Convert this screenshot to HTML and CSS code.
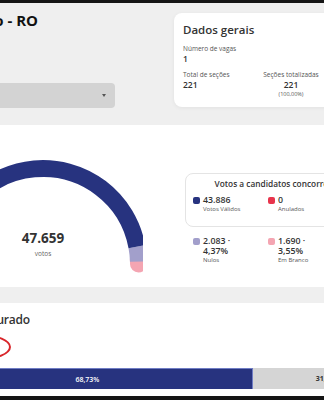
FILE: index.html
```html
<!DOCTYPE html>
<html lang="pt-BR">
<head>
<meta charset="utf-8">
<title>Resultado - RO</title>
<link rel="stylesheet" href="styles.css">
</head>
<body>
<div class="page">
  <header class="top">
    <div class="left">
      <h1 class="title">Porto Velho - RO</h1>
      <div class="select"><span class="caret"></span></div>
    </div>
    <section class="card">
      <h2 class="card-title">Dados gerais</h2>
      <div class="stats">
        <div class="stat">
          <div class="label">Número de vagas</div>
          <div class="value">1</div>
        </div>
        <div class="stat"></div>
        <div class="stat">
          <div class="label">Total de seções</div>
          <div class="value">221</div>
        </div>
        <div class="stat center">
          <div class="label">Seções totalizadas</div>
          <div class="value">221</div>
          <div class="pct">(100,00%)</div>
        </div>
      </div>
    </section>
  </header>

  <section class="votes">
    <div class="gauge">
      <svg class="gauge-svg" width="220" height="162" viewBox="0 0 220 162">
        <path d="M 215.37 134.0 A 95.5 95.5 0 0 1 215.5 139" fill="none" stroke="#f4a5b2" stroke-width="17" stroke-linecap="round"/>
        <path d="M 213.9 121.6 A 95.5 95.5 0 0 1 215.47 136.5" fill="none" stroke="#a29fcb" stroke-width="17"/>
        <path d="M 24.5 139 A 95.5 95.5 0 0 1 213.9 121.6" fill="none" stroke="#27337f" stroke-width="17"/>
      </svg>
      <div class="gauge-label">
        <div class="total">47.659</div>
        <div class="unit">votos</div>
      </div>
    </div>
    <div class="legend-wrap">
      <div class="legend">
        <div class="legend-title">Votos a candidatos concorrentes</div>
        <div class="items">
          <div class="item"><span class="sq navy"></span><div><div class="num">43.886</div><div class="lbl">Votos Válidos</div></div></div>
          <div class="item"><span class="sq red"></span><div><div class="num">0</div><div class="lbl">Anulados</div></div></div>
        </div>
      </div>
      <div class="items outside">
        <div class="item"><span class="sq lilac"></span><div><div class="num">2.083 · 4,37%</div><div class="lbl">Nulos</div></div></div>
        <div class="item"><span class="sq pink"></span><div><div class="num">1.690 · 3,55%</div><div class="lbl">Em Branco</div></div></div>
      </div>
    </div>
  </section>

  <section class="apurado">
    <h2 class="subtitle">Percentual apurado</h2>
    <div class="mark"></div>
    <div class="bar">
      <div class="fill" style="width:68.73%">68,73%</div>
      <div class="rest">31,27%</div>
    </div>
  </section>
</div>
</body>
</html>
```

FILE: styles.css
```css
html, body {
  margin: 0;
  padding: 0;
}
body {
  height: 400px;
  box-sizing: border-box;
  border-top: 3px solid #151515;
  border-bottom: 4px solid #151515;
  background: #efefef;
  overflow: hidden;
  font-family: "Open Sans", "Noto Sans", sans-serif;
  color: #333;
}
.page {
  margin-left: -200px;
  width: 640px;
  position: relative;
}
.top {
  display: flex;
  height: 122px;
}
.left {
  width: 315px;
  flex: none;
}
.title {
  width: 238px;
  margin: 6px 0 0;
  text-align: right;
  white-space: nowrap;
  overflow: hidden;
  font-size: 15px;
  line-height: 22px;
  font-weight: 700;
  color: #111;
}
.select {
  margin-top: 52px;
  height: 25px;
  background: #d3d3d3;
  border-radius: 4px;
  display: flex;
  justify-content: flex-end;
  align-items: center;
  padding-right: 9px;
}
.caret {
  width: 0;
  height: 0;
  border-left: 2.5px solid transparent;
  border-right: 2.5px solid transparent;
  border-top: 3px solid #555;
}
.card {
  margin: 10px 0 0 59px;
  width: 144px;
  height: 76px;
  padding: 9px;
  background: #fff;
  border-radius: 8px;
  box-shadow: 0 1px 4px rgba(0,0,0,0.06);
  flex: none;
}
.card-title {
  margin: 0;
  font-size: 11.5px;
  line-height: 15px;
  font-weight: 600;
  color: #333;
}
.stats {
  margin-top: 8px;
  display: grid;
  grid-template-columns: 72px 72px;
  row-gap: 7px;
}
.label {
  font-size: 6.5px;
  line-height: 8px;
  color: #555;
  white-space: nowrap;
}
.value {
  font-size: 8.5px;
  line-height: 11px;
  font-weight: 600;
  color: #333;
}
.pct {
  font-size: 5.5px;
  line-height: 8px;
  color: #555;
}
.center {
  text-align: center;
}
.votes {
  display: flex;
  height: 162px;
  margin-top: 0;
  margin-bottom: 16px;
  background: #fff;
}
.gauge {
  position: relative;
  margin-left: 123px;
  width: 220px;
  height: 162px;
  flex: none;
}
.gauge-svg {
  display: block;
}
.gauge-label {
  position: absolute;
  left: 70px;
  top: 105px;
  width: 100px;
  text-align: center;
}
.total {
  font-size: 13.5px;
  line-height: 16px;
  font-weight: 700;
  color: #333;
}
.unit {
  margin-top: 3px;
  font-size: 6.5px;
  line-height: 9px;
  color: #666;
}
.legend-wrap {
  margin: 48px 0 0 42px;
  width: 190px;
  flex: none;
}
.legend {
  border: 1px solid #e4e4e4;
  border-radius: 8px;
  padding: 4px 0 12px;
}
.legend-title {
  text-align: center;
  font-size: 8.3px;
  line-height: 12px;
  font-weight: 600;
  color: #333;
  white-space: nowrap;
}
.items {
  display: grid;
  grid-template-columns: 60px 60px;
  column-gap: 15px;
  padding-left: 7px;
  margin-top: 5px;
}
.items.outside {
  padding-left: 8px;
  margin-top: 9px;
}
.item {
  display: flex;
  gap: 3px;
  align-items: flex-start;
}
.sq {
  flex: none;
  width: 7px;
  height: 7px;
  border-radius: 2px;
  margin-top: 2px;
}
.navy { background: #27337f; }
.red { background: #e8344c; }
.lilac { background: #a29fcb; }
.pink { background: #f4a5b2; }
.num {
  font-size: 8.8px;
  line-height: 10px;
  font-weight: 600;
  color: #333;
  width: 50px;
}
.lbl {
  font-size: 6px;
  line-height: 9px;
  color: #555;
  white-space: nowrap;
}
.apurado {
  height: 93px;
  background: #fff;
  position: relative;
  overflow: hidden;
}
.subtitle {
  width: 230px;
  margin: 0;
  padding-top: 8px;
  text-align: right;
  white-space: nowrap;
  overflow: hidden;
  font-size: 12px;
  letter-spacing: -0.2px;
  line-height: 18px;
  font-weight: 600;
  color: #333;
}
.mark {
  position: absolute;
  left: 150px;
  top: 31px;
  width: 57px;
  height: 22px;
  border: 2px solid #d9262b;
  border-radius: 50%;
}
.bar {
  margin: 39px 0 0 123px;
  width: 480px;
  height: 21px;
  display: flex;
  background: #d5d5d5;
}
.fill {
  box-sizing: border-box;
  height: 21px;
  background: #27337f;
  border-top: 1px solid #6f7cc4;
  border-right: 1px solid #6f7cc4;
  color: #fff;
  font-size: 7px;
  font-weight: 600;
  display: flex;
  align-items: center;
  justify-content: center;
}
.rest {
  flex: 1;
  display: flex;
  align-items: center;
  justify-content: center;
  font-size: 7px;
  font-weight: 700;
  color: #333;
}
```
